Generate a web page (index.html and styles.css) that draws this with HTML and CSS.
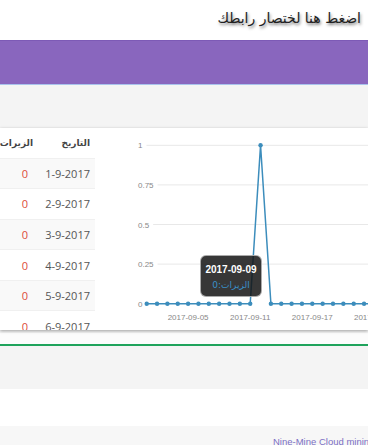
FILE: index.html
```html
<!DOCTYPE html>
<html lang="ar">
<head>
    <meta charset="UTF-8">
    <meta name="viewport" content="width=device-width, initial-scale=1.0">
    <title>Nine-Mine</title>
    <link rel="stylesheet" href="styles.css">
</head>
<body>

    <!-- Top link -->
    <div class="topbar">
        <a class="shorten" href="#">اضغط هنا لختصار رابطك</a>
    </div>

    <!-- Navbar -->
    <nav class="navbar"></nav>

    <!-- Stats -->
    <div class="content">
        <div class="card">
            <div class="table-wrap">
                <table class="stats">
                    <thead>
                        <tr><th>التاريخ</th><th>الزيرات</th></tr>
                    </thead>
                    <tbody>
                        <tr><td>1-9-2017</td><td class="zero">0</td></tr>
                        <tr><td>2-9-2017</td><td class="zero">0</td></tr>
                        <tr><td>3-9-2017</td><td class="zero">0</td></tr>
                        <tr><td>4-9-2017</td><td class="zero">0</td></tr>
                        <tr><td>5-9-2017</td><td class="zero">0</td></tr>
                        <tr><td>6-9-2017</td><td class="zero">0</td></tr>
                    </tbody>
                </table>
            </div>

            <div class="chart">
                <svg id="chart" width="273" height="202" viewBox="0 0 273 202"></svg>
                <div class="hover">
                    <div class="hover-date">2017-09-09</div>
                    <div class="hover-val">الزيرات:0</div>
                </div>
            </div>
        </div>

        <div class="spacer"></div>

        <div class="box">
            <div class="box-header"></div>
            <div class="box-body"></div>
        </div>
    </div>

    <footer class="footer">
        <a href="#">Nine-Mine Cloud mining</a>
    </footer>

    <script>
        // Chart data: visits per day in September
        const svg = document.getElementById('chart');
        const ns = 'http://www.w3.org/2000/svg';
        const x0 = 51.7, step = 10.35;
        const yTop = 17.3, yBottom = 175.7;
        const visits = [];
        for (let i = 0; i < 30; i++) visits.push(i === 11 ? 1 : 0);

        function el(name, attrs, text) {
            const node = document.createElementNS(ns, name);
            for (const k in attrs) node.setAttribute(k, attrs[k]);
            if (text !== undefined) node.textContent = text;
            svg.appendChild(node);
            return node;
        }

        // Grid + y labels
        const ticks = [['1', 1], ['0.75', 0.75], ['0.5', 0.5], ['0.25', 0.25], ['0', 0]];
        ticks.forEach(t => {
            const y = yBottom - t[1] * (yBottom - yTop);
            const label = el('text', { x: 43, y: y + 3, class: 'ylabel' }, t[0]);
            const end = 43 + label.getComputedTextLength() + 4;
            if (t[1] > 0) el('line', { x1: end, x2: 273, y1: y, y2: y, class: 'grid' });
        });

        // X labels
        [4, 10, 16, 22].forEach(i => {
            const day = String(i + 1).padStart(2, '0');
            el('text', { x: x0 + i * step, y: 192, class: 'xlabel' }, '2017-09-' + day);
        });

        // Line
        const points = visits.map((v, i) => (x0 + i * step) + ',' + (yBottom - v * (yBottom - yTop)));
        el('polyline', { points: points.join(' '), class: 'line' });

        // Dots
        visits.forEach((v, i) => {
            el('circle', { cx: x0 + i * step, cy: yBottom - v * (yBottom - yTop), r: 2.2, class: 'dot' });
        });
    </script>

</body>
</html>
```

FILE: styles.css
```css
/* Basic Reset */
* {
    margin: 0;
    padding: 0;
    box-sizing: border-box;
}

body {
    font-family: "Open Sans", "DejaVu Sans", sans-serif;
    background-color: #fff;
    color: #555;
    overflow: hidden;
}

/* Top link */
.topbar {
    height: 40px;
    background-color: #fff;
    display: flex;
    justify-content: flex-end;
    align-items: center;
    padding-right: 7px;
}

.shorten {
    font-family: "DejaVu Sans", sans-serif;
    font-size: 14px;
    color: #222;
    text-decoration: none;
    text-shadow: 1px 2px 3px rgba(0, 0, 0, 0.5);
    margin-top: -4px;
}

/* Navbar */
.navbar {
    height: 45px;
    background-color: #8966be;
    border-top: 1px solid #7d5ab6;
    border-bottom: 1px solid #a9c3ec;
}

/* Stats */
.content {
    background-color: #f4f4f4;
    padding-top: 43px;
}

.card {
    display: flex;
    height: 202px;
    background-color: #fff;
    overflow: hidden;
    box-shadow: 0 1px 3px rgba(0, 0, 0, 0.35);
    position: relative;
}

.table-wrap {
    width: 95px;
    flex-shrink: 0;
}

.stats {
    direction: rtl;
    width: 140px;
    margin-left: -45px;
    border-collapse: collapse;
    font-size: 11px;
}

.stats th {
    height: 30px;
    font-size: 9px;
    font-weight: bold;
    color: #444;
    text-align: right;
    padding: 0 5px;
}

.stats th:last-child {
    padding-right: 0;
}

.stats th:first-child,
.stats td:first-child {
    width: 62px;
}

.stats td {
    height: 30.6px;
    text-align: right;
    padding: 0 5px;
    border-top: 1px solid #f0f0f0;
    color: #555;
}

.stats tbody tr:nth-child(odd) {
    background-color: #f9f9f9;
}

.stats td.zero {
    color: #dd4b39;
}

/* Chart */
.chart {
    position: relative;
    flex: 1;
}

#chart {
    display: block;
    font-family: "Liberation Sans", Arial, sans-serif;
}

#chart .ylabel,
#chart .xlabel {
    font-size: 8px;
    fill: #888;
}

#chart .xlabel {
    text-anchor: middle;
}

#chart .grid {
    stroke: #e8e8e8;
    stroke-width: 1;
}

#chart .line {
    fill: none;
    stroke: #3c8dbc;
    stroke-width: 1.5;
}

#chart .dot {
    fill: #3c8dbc;
}

.hover {
    position: absolute;
    left: 105px;
    top: 127px;
    width: 62px;
    height: 42px;
    background-color: rgba(20, 20, 20, 0.85);
    border: 1px solid rgba(200, 200, 200, 0.8);
    border-radius: 6px;
    text-align: center;
    font-family: "Liberation Sans", Arial, sans-serif;
    padding-top: 7px;
}

.hover-date {
    font-size: 10px;
    font-weight: bold;
    color: #fff;
    line-height: 14px;
}

.hover-val {
    font-family: "DejaVu Sans", sans-serif;
    font-size: 9px;
    color: #3a8fc8;
    line-height: 16px;
}

.spacer {
    height: 11px;
    background-color: #fcfcfc;
    margin-top: 3px;
}

.box {
    border-top: 2px solid #1fa35c;
}

.box-header {
    height: 43px;
    background-color: #f4f4f4;
}

.box-body {
    height: 37px;
    background-color: #fff;
}

/* Footer */
.footer {
    height: 40px;
    background-color: #f7f7f7;
    padding: 10px 0 0 273px;
    font-family: "Liberation Sans", Arial, sans-serif;
    font-size: 9.5px;
    white-space: nowrap;
}

.footer a {
    color: #7b6fc4;
    text-decoration: none;
}
```
